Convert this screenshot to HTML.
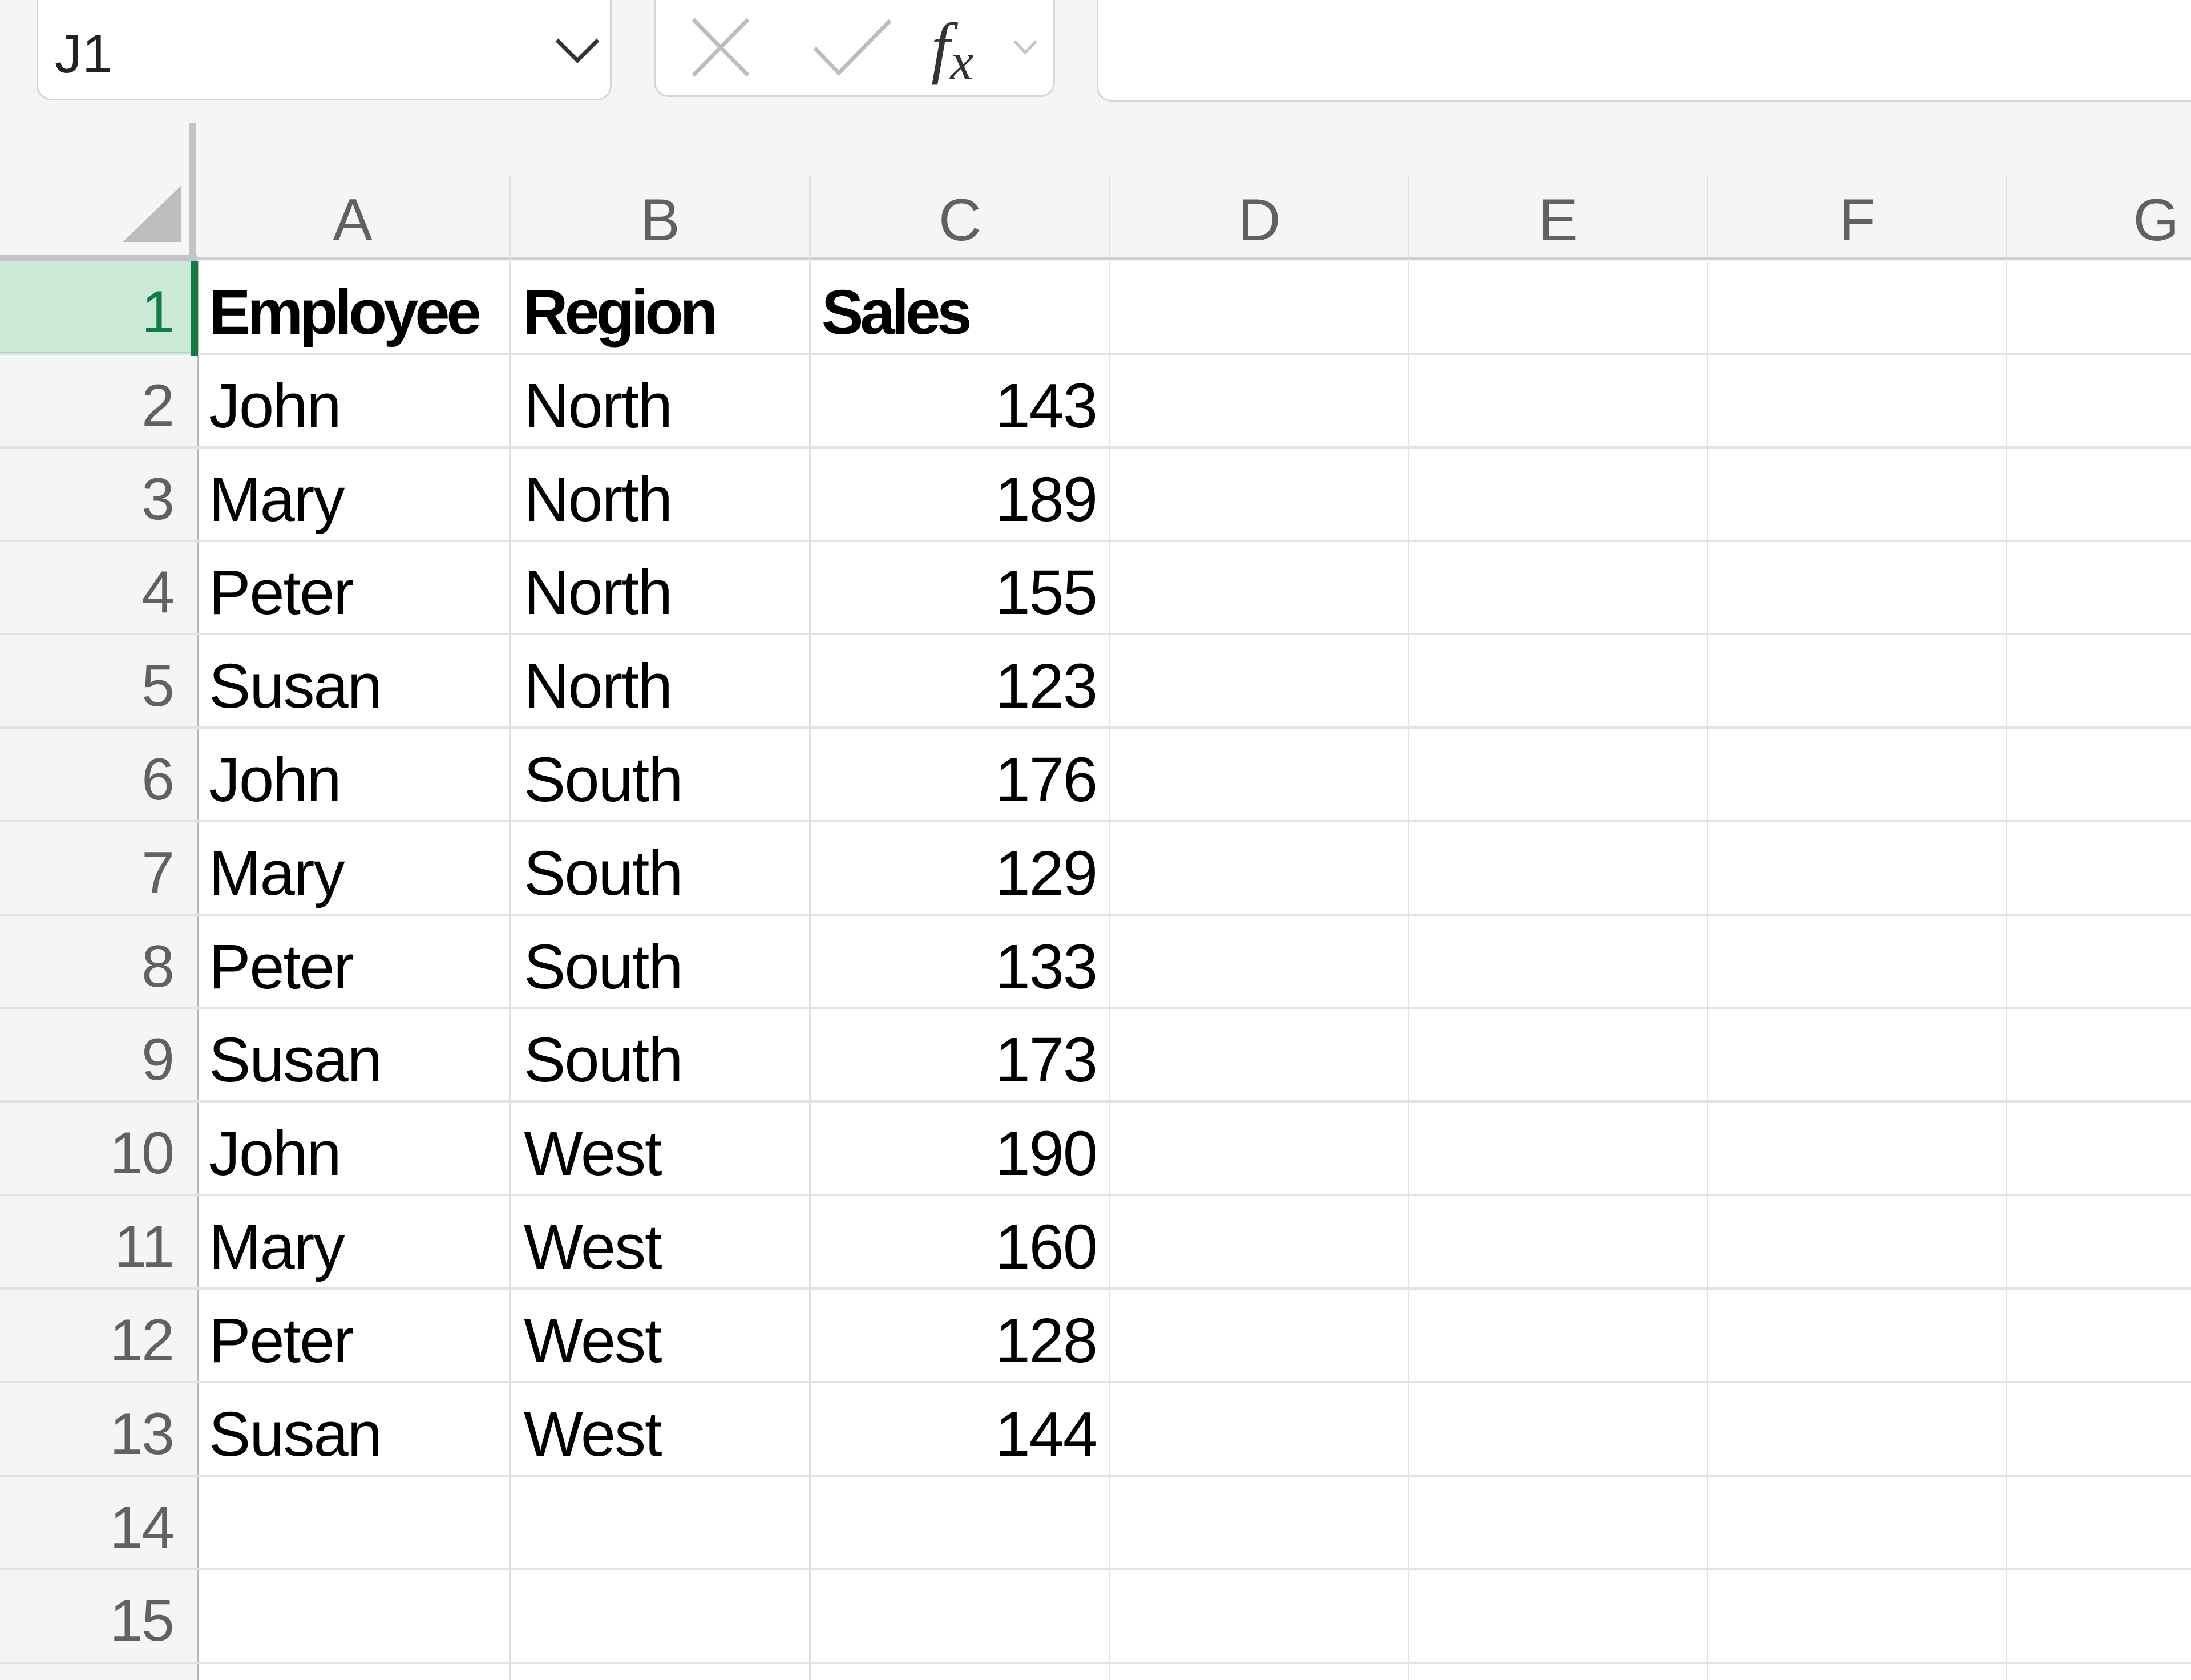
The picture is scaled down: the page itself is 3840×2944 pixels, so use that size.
<!DOCTYPE html>
<html><head><meta charset="utf-8"><style>
*{margin:0;padding:0;box-sizing:border-box}
body{width:3840px;height:2944px;overflow:hidden;background:#f5f5f5;font-family:"Liberation Sans",sans-serif;position:relative}
.a{position:absolute}
.grid{position:absolute;left:347px;top:457px;width:3493px;height:2487px;background:#fff}
.hl{position:absolute;height:4px;background:#e2e2e2;left:0;width:3840px}
.rn{position:absolute;left:0;width:304px;text-align:right;font-size:104px;color:#616161;height:164px;line-height:164px;padding-top:8px;letter-spacing:-2px}
.t{position:absolute;font-size:110px;color:#000;height:164px;line-height:164px;padding-top:9px;white-space:nowrap;letter-spacing:-2px}
.b{font-weight:bold;letter-spacing:-6px}
.n{text-align:right;width:480px;left:1442px}
.ch{position:absolute;top:306px;height:147px;line-height:160px;font-size:104px;color:#616161;text-align:center}
</style></head><body>
<div class="a" style="left:64px;top:-30px;width:1008px;height:206px;background:#fff;border:3px solid #d6d6d6;border-radius:26px"></div>
<div class="a" style="left:96px;top:40px;font-size:96px;color:#222">J1</div>
<svg class="a" style="left:970px;top:62px" width="84" height="54"><path d="M6 8 L42 44 L78 8" stroke="#333" stroke-width="7" fill="none"/></svg>
<div class="a" style="left:1146px;top:-30px;width:703px;height:200px;background:#fff;border:3px solid #d6d6d6;border-radius:26px"></div>
<svg class="a" style="left:1205px;top:28px" width="120" height="115"><path d="M10 6 L106 104 M106 6 L10 104" stroke="#bdbdbd" stroke-width="7" fill="none"/></svg>
<svg class="a" style="left:1420px;top:28px" width="150" height="110"><path d="M8 56 L50 100 L140 8" stroke="#bdbdbd" stroke-width="7" fill="none"/></svg>
<div class="a" style="left:1632px;top:14px;font-size:120px;font-family:'Liberation Serif',serif;font-style:italic;color:#333">f<span style="font-size:92px;position:relative;top:16px">x</span></div>
<svg class="a" style="left:1774px;top:66px" width="46" height="34"><path d="M4 6 L23 26 L42 6" stroke="#c4c4c4" stroke-width="5" fill="none"/></svg>
<div class="a" style="left:1922px;top:-30px;width:2000px;height:208px;background:#fff;border:3px solid #d6d6d6;border-radius:26px"></div>
<svg class="a" style="left:215px;top:325px" width="105" height="100"><polygon points="103,0 103,99 0,99" fill="#bdbdbd"/></svg>
<div class="a" style="left:331px;top:215px;width:12px;height:242px;background:#c4c4c4"></div>
<div class="a" style="left:0;top:447px;width:345px;height:10px;background:#c4c4c4"></div>
<div class="a" style="left:343px;top:450px;width:3497px;height:6px;background:#cdcdcd"></div>
<div class="a" style="left:892px;top:306px;width:3px;height:147px;background:#e0e0e0"></div>
<div class="a" style="left:1418px;top:306px;width:3px;height:147px;background:#e0e0e0"></div>
<div class="a" style="left:1943px;top:306px;width:3px;height:147px;background:#e0e0e0"></div>
<div class="a" style="left:2467px;top:306px;width:3px;height:147px;background:#e0e0e0"></div>
<div class="a" style="left:2991px;top:306px;width:3px;height:147px;background:#e0e0e0"></div>
<div class="a" style="left:3515px;top:306px;width:3px;height:147px;background:#e0e0e0"></div>
<div class="ch" style="left:343px;width:550px">A</div>
<div class="ch" style="left:894px;width:526px">B</div>
<div class="ch" style="left:1420px;width:525px">C</div>
<div class="ch" style="left:1945px;width:524px">D</div>
<div class="ch" style="left:2469px;width:524px">E</div>
<div class="ch" style="left:2993px;width:524px">F</div>
<div class="ch" style="left:3517px;width:524px">G</div>
<div class="grid"></div>
<div class="a" style="left:0;top:457px;width:347px;height:163px;background:#cce8d6;border-bottom:4px solid #a9d8bb"></div>
<div class="a" style="left:346px;top:457px;width:3px;height:2487px;background:#b8b8b8"></div>
<div class="a" style="left:892px;top:457px;width:3px;height:2487px;background:#e0e0e0"></div>
<div class="a" style="left:1418px;top:457px;width:3px;height:2487px;background:#e0e0e0"></div>
<div class="a" style="left:1943px;top:457px;width:3px;height:2487px;background:#e0e0e0"></div>
<div class="a" style="left:2467px;top:457px;width:3px;height:2487px;background:#e0e0e0"></div>
<div class="a" style="left:2991px;top:457px;width:3px;height:2487px;background:#e0e0e0"></div>
<div class="a" style="left:3515px;top:457px;width:3px;height:2487px;background:#e0e0e0"></div>
<div class="hl" style="top:618px"></div>
<div class="hl" style="top:782px"></div>
<div class="hl" style="top:946px"></div>
<div class="hl" style="top:1109px"></div>
<div class="hl" style="top:1273px"></div>
<div class="hl" style="top:1437px"></div>
<div class="hl" style="top:1601px"></div>
<div class="hl" style="top:1765px"></div>
<div class="hl" style="top:1928px"></div>
<div class="hl" style="top:2092px"></div>
<div class="hl" style="top:2256px"></div>
<div class="hl" style="top:2420px"></div>
<div class="hl" style="top:2584px"></div>
<div class="hl" style="top:2748px"></div>
<div class="hl" style="top:2912px"></div>
<div class="a" style="left:335px;top:457px;width:12px;height:167px;background:#107c41"></div>
<div class="rn" style="top:457px;color:#107c41">1</div>
<div class="rn" style="top:621px">2</div>
<div class="rn" style="top:785px">3</div>
<div class="rn" style="top:948px">4</div>
<div class="rn" style="top:1112px">5</div>
<div class="rn" style="top:1276px">6</div>
<div class="rn" style="top:1440px">7</div>
<div class="rn" style="top:1604px">8</div>
<div class="rn" style="top:1767px">9</div>
<div class="rn" style="top:1931px">10</div>
<div class="rn" style="top:2095px">11</div>
<div class="rn" style="top:2259px">12</div>
<div class="rn" style="top:2423px">13</div>
<div class="rn" style="top:2587px">14</div>
<div class="rn" style="top:2750px">15</div>
<div class="t b" style="top:457px;left:366px">Employee</div>
<div class="t b" style="top:457px;left:916px">Region</div>
<div class="t b" style="top:457px;left:1440px">Sales</div>
<div class="t" style="top:621px;left:366px">John</div><div class="t" style="top:621px;left:918px">North</div><div class="t n" style="top:621px">143</div>
<div class="t" style="top:785px;left:366px">Mary</div><div class="t" style="top:785px;left:918px">North</div><div class="t n" style="top:785px">189</div>
<div class="t" style="top:948px;left:366px">Peter</div><div class="t" style="top:948px;left:918px">North</div><div class="t n" style="top:948px">155</div>
<div class="t" style="top:1112px;left:366px">Susan</div><div class="t" style="top:1112px;left:918px">North</div><div class="t n" style="top:1112px">123</div>
<div class="t" style="top:1276px;left:366px">John</div><div class="t" style="top:1276px;left:918px">South</div><div class="t n" style="top:1276px">176</div>
<div class="t" style="top:1440px;left:366px">Mary</div><div class="t" style="top:1440px;left:918px">South</div><div class="t n" style="top:1440px">129</div>
<div class="t" style="top:1604px;left:366px">Peter</div><div class="t" style="top:1604px;left:918px">South</div><div class="t n" style="top:1604px">133</div>
<div class="t" style="top:1767px;left:366px">Susan</div><div class="t" style="top:1767px;left:918px">South</div><div class="t n" style="top:1767px">173</div>
<div class="t" style="top:1931px;left:366px">John</div><div class="t" style="top:1931px;left:918px">West</div><div class="t n" style="top:1931px">190</div>
<div class="t" style="top:2095px;left:366px">Mary</div><div class="t" style="top:2095px;left:918px">West</div><div class="t n" style="top:2095px">160</div>
<div class="t" style="top:2259px;left:366px">Peter</div><div class="t" style="top:2259px;left:918px">West</div><div class="t n" style="top:2259px">128</div>
<div class="t" style="top:2423px;left:366px">Susan</div><div class="t" style="top:2423px;left:918px">West</div><div class="t n" style="top:2423px">144</div>
</body></html>
